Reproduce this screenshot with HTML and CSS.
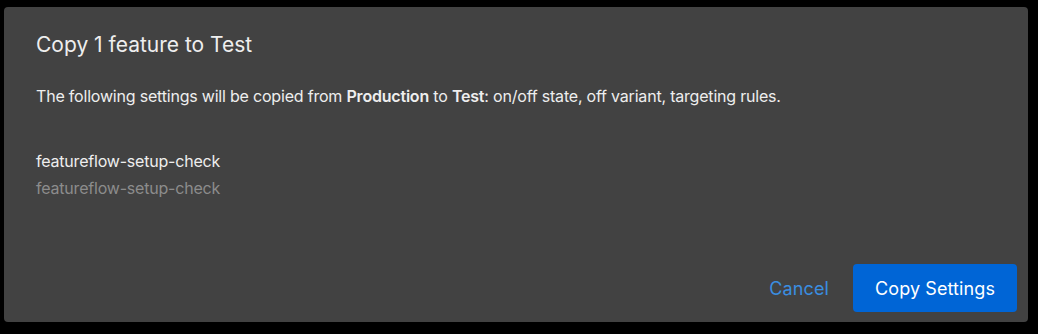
FILE: index.html
```html
<!DOCTYPE html>
<html lang="en">
<head>
<meta charset="utf-8">
<title>Copy feature</title>
<link rel="stylesheet" href="styles.css">
</head>
<body>
<div class="dialog">
  <h2 class="title">Copy 1 feature to Test</h2>
  <div class="content">
    <p class="desc">The following settings will be copied from <strong>Production</strong> to <strong>Test</strong>: on/off state, off variant, targeting rules.</p>
    <div class="feature">
      <div class="feature-name">featureflow-setup-check</div>
      <div class="feature-key">featureflow-setup-check</div>
    </div>
  </div>
  <div class="actions">
    <button class="btn btn-text">Cancel</button>
    <button class="btn btn-primary">Copy Settings</button>
  </div>
</div>
</body>
</html>
```

FILE: styles.css
```css
html, body {
  margin: 0;
  padding: 0;
  background: #000;
  font-family: Inter, "Liberation Sans", sans-serif;
}
.dialog {
  box-sizing: border-box;
  margin: 7px 0 0 4px;
  width: 1024px;
  height: 315px;
  background: #424242;
  border-radius: 4px;
  display: flex;
  flex-direction: column;
  color: #eeeeee;
}
.title {
  margin: 0;
  padding: 22px 32px 0;
  font-size: 21px;
  font-weight: 400;
  line-height: 32px;
}
.content {
  flex: 1;
  padding: 0 32px;
}
.desc {
  margin: 25px 0 0;
  font-size: 16px;
  letter-spacing: -0.2px;
  line-height: 20px;
}
.desc strong { font-weight: 600; }
.feature {
  margin-top: 45px;
  font-size: 16px;
  letter-spacing: -0.2px;
  line-height: 20px;
}
.feature-key {
  margin-top: 7px;
  color: #8c8c8c;
}
.actions {
  display: flex;
  justify-content: flex-end;
  align-items: center;
  gap: 12px;
  padding: 0 11px 10px 0;
}
.btn {
  font-family: inherit;
  font-size: 18px;
  letter-spacing: 0.1px;
  border: none;
  border-radius: 4px;
  height: 48px;
  cursor: pointer;
}
.btn-text {
  background: transparent;
  color: #3a8ee0;
  padding: 0 12px;
}
.btn-primary {
  background: #0065d6;
  color: #fff;
  width: 164px;
}
```
